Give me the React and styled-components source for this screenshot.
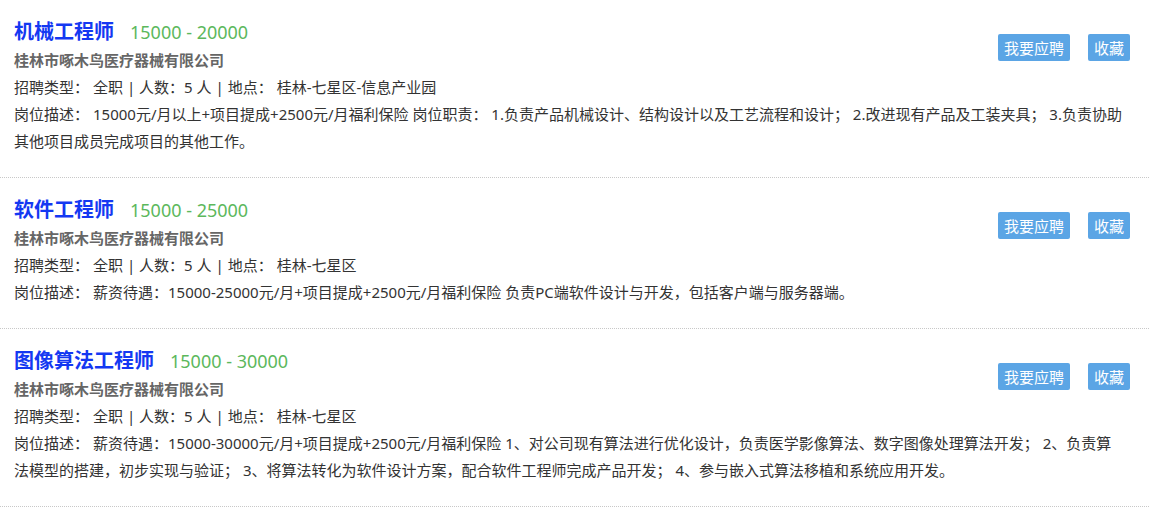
import React from 'react';
import styled, {createGlobalStyle} from 'styled-components';

const GlobalStyle = createGlobalStyle`
  html, body {
    margin: 0;
    padding: 0;
    background: #fff;
  }
  body {
    font-family: "Noto Sans", "Noto Sans CJK SC", "Liberation Sans", sans-serif;
    color: #333;
  }
`;

const jobs = [
  {
    title: '机械工程师',
    salary: '15000 - 20000',
    company: '桂林市啄木鸟医疗器械有限公司',
    type: '全职',
    count: '5 人',
    place: '桂林-七星区-信息产业园',
    desc:
      '15000元/月以上+项目提成+2500元/月福利保险 岗位职责： 1.负责产品机械设计、结构设计以及工艺流程和设计； 2.改进现有产品及工装夹具； 3.负责协助其他项目成员完成项目的其他工作。'
  },
  {
    title: '软件工程师',
    salary: '15000 - 25000',
    company: '桂林市啄木鸟医疗器械有限公司',
    type: '全职',
    count: '5 人',
    place: '桂林-七星区',
    desc: '薪资待遇：15000-25000元/月+项目提成+2500元/月福利保险 负责PC端软件设计与开发，包括客户端与服务器端。'
  },
  {
    title: '图像算法工程师',
    salary: '15000 - 30000',
    company: '桂林市啄木鸟医疗器械有限公司',
    type: '全职',
    count: '5 人',
    place: '桂林-七星区',
    desc:
      '薪资待遇：15000-30000元/月+项目提成+2500元/月福利保险 1、对公司现有算法进行优化设计，负责医学影像算法、数字图像处理算法开发； 2、负责算法模型的搭建，初步实现与验证； 3、将算法转化为软件设计方案，配合软件工程师完成产品开发； 4、参与嵌入式算法移植和系统应用开发。'
  }
];

const List = styled.ul`
  list-style: none;
  margin: 0;
  padding: 0;
  width: 1149px;
`;

const Item = styled.li`
  padding: 15px 19px 22px 14px;
  border-bottom: 1px dotted #c8c8c8;
`;

const Head = styled.div`
  display: flex;
  justify-content: space-between;
  align-items: flex-start;
`;

const TitleRow = styled.div`
  display: flex;
  align-items: baseline;
  height: 32px;
  line-height: 32px;
`;

const Title = styled.a`
  font-family: "Noto Sans CJK SC", sans-serif;
  font-size: 20px;
  font-weight: 700;
  color: #1438f2;
  text-decoration: none;
  margin-right: 16px;
`;

const Salary = styled.span`
  font-size: 18px;
  color: #5cb85c;
`;

const Company = styled.div`
  font-size: 15px;
  font-weight: 700;
  color: #666;
  line-height: 27px;
`;

const Actions = styled.div`
  display: flex;
  gap: 18px;
  margin-top: 19px;
`;

const Button = styled.button`
  height: 27px;
  padding: 0 6px;
  border: none;
  border-radius: 2px;
  background: #5ba5e5;
  color: #fff;
  font-family: "Noto Sans CJK SC", sans-serif;
  font-size: 15px;
  line-height: 27px;
  cursor: pointer;
`;

const Line = styled.p`
  margin: 0;
  font-size: 15px;
  line-height: 27px;
  color: #333;
`;

const Description = styled(Line)`
  padding-right: 6px;
`;

const Label = styled.span`
  margin-right: 4px;
`;

const JobItem = ({job}) => (
  <Item>
    <Head>
      <div>
        <TitleRow>
          <Title href="#">{job.title}</Title>
          <Salary>{job.salary}</Salary>
        </TitleRow>
        <Company>{job.company}</Company>
      </div>
      <Actions>
        <Button>我要应聘</Button>
        <Button>收藏</Button>
      </Actions>
    </Head>
    <Line>
      <Label>招聘类型：</Label>
      {job.type} | 人数：{job.count} | <Label>地点：</Label>
      {job.place}
    </Line>
    <Description>
      <Label>岗位描述：</Label>
      {job.desc}
    </Description>
  </Item>
);

export default function App() {
  return (
    <>
      <GlobalStyle />
      <List>
        {jobs.map(job => (
          <JobItem key={job.title} job={job} />
        ))}
      </List>
    </>
  );
}
